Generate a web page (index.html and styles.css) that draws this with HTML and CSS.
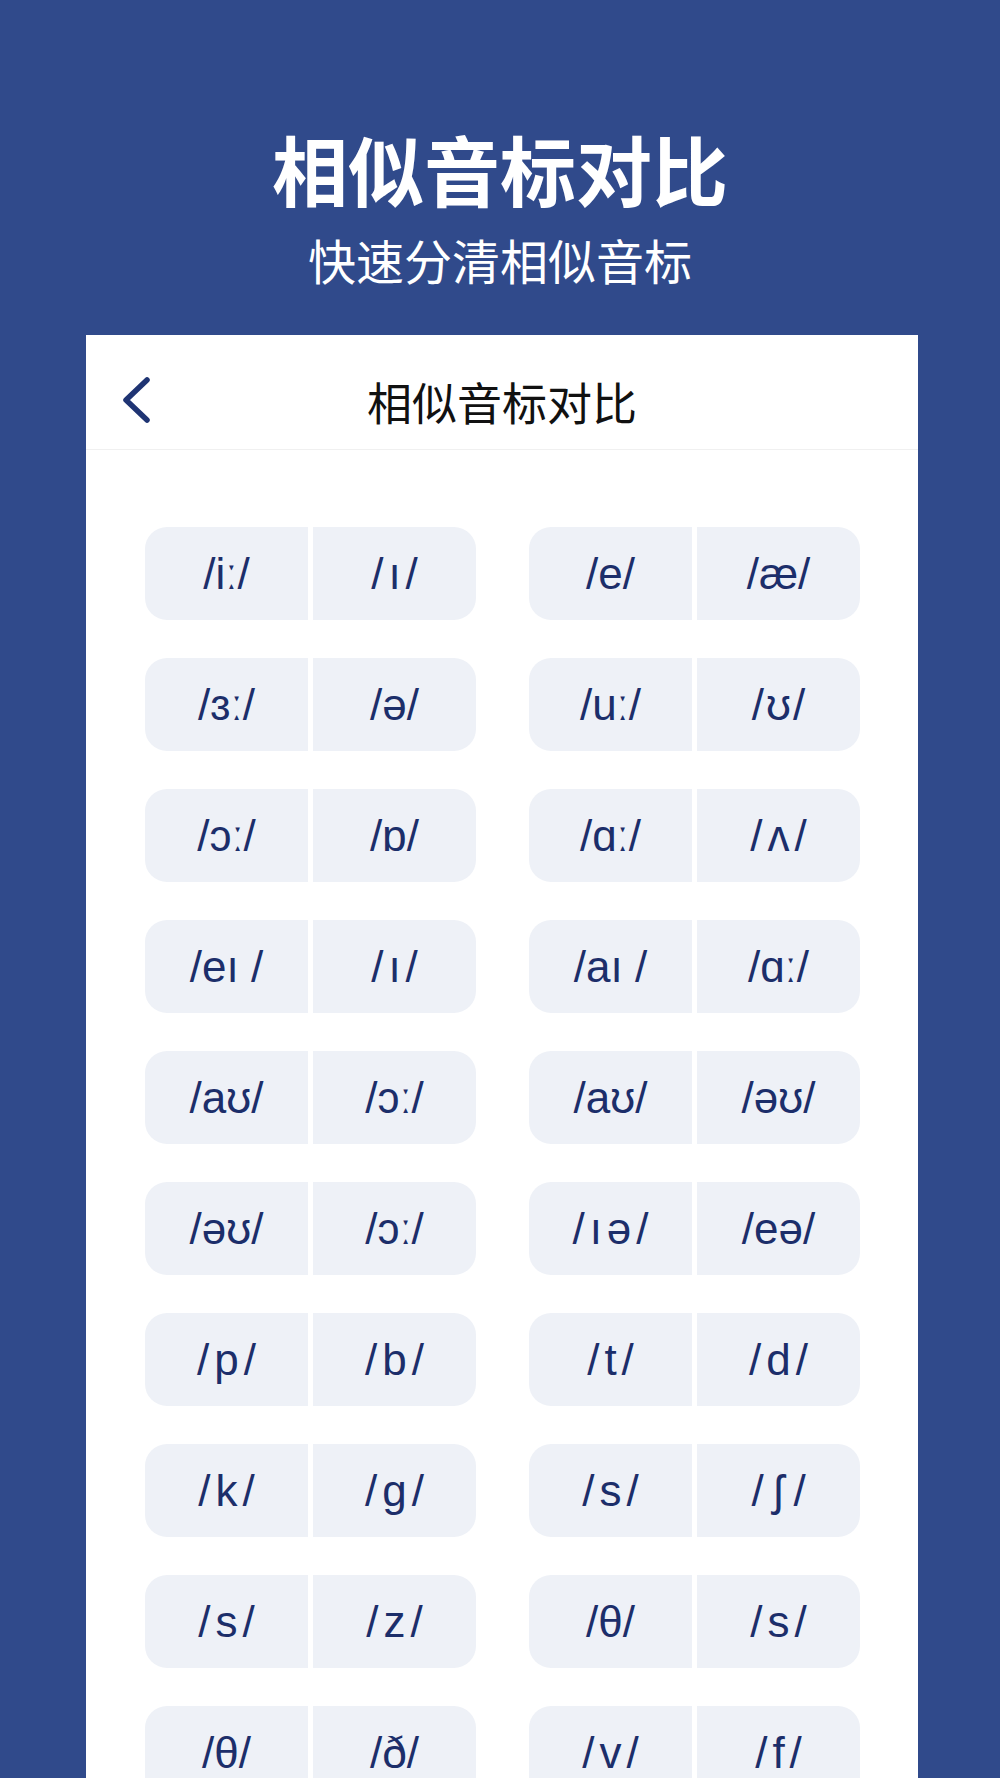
FILE: index.html
```html
<!DOCTYPE html>
<html lang="zh-CN">
<head>
    <meta charset="UTF-8">
    <meta name="viewport" content="width=device-width, initial-scale=1.0">
    <title>相似音标对比</title>
    <link rel="stylesheet" href="styles.css">
</head>
<body>
    <div class="hero">
        <h1>相似音标对比</h1>
        <p class="subtitle">快速分清相似音标</p>
    </div>

    <div class="card">
        <div class="card-header">
            <svg class="back" width="34" height="52" viewBox="0 0 34 52">
                <polyline points="27,6 6,26 27,46" fill="none" stroke="#1f3473" stroke-width="5.5" stroke-linecap="round" stroke-linejoin="round"/>
            </svg>
            <h2>相似音标对比</h2>
        </div>

        <div class="pairs">
            <div class="pair"><span>/iː/</span><span class="sp">/ı/</span></div>
            <div class="pair"><span>/e/</span><span>/æ/</span></div>

            <div class="pair"><span>/ɜː/</span><span>/ə/</span></div>
            <div class="pair"><span>/uː/</span><span class="sp-s">/ʊ/</span></div>

            <div class="pair"><span>/ɔː/</span><span>/ɒ/</span></div>
            <div class="pair"><span>/ɑː/</span><span class="sp">/ʌ/</span></div>

            <div class="pair"><span>/eı /</span><span class="sp">/ı/</span></div>
            <div class="pair"><span>/aı /</span><span>/ɑː/</span></div>

            <div class="pair"><span>/aʊ/</span><span>/ɔː/</span></div>
            <div class="pair"><span>/aʊ/</span><span>/əʊ/</span></div>

            <div class="pair"><span>/əʊ/</span><span>/ɔː/</span></div>
            <div class="pair"><span class="sp">/ıə/</span><span>/eə/</span></div>

            <div class="pair"><span class="sp">/p/</span><span class="sp">/b/</span></div>
            <div class="pair"><span class="sp">/t/</span><span class="sp">/d/</span></div>

            <div class="pair"><span class="sp">/k/</span><span class="sp">/g/</span></div>
            <div class="pair"><span class="sp">/s/</span><span class="sp-w">/ʃ/</span></div>

            <div class="pair"><span class="sp">/s/</span><span class="sp">/z/</span></div>
            <div class="pair"><span>/θ/</span><span class="sp">/s/</span></div>

            <div class="pair"><span>/θ/</span><span>/ð/</span></div>
            <div class="pair"><span class="sp">/v/</span><span class="sp">/f/</span></div>
        </div>
    </div>
</body>
</html>
```

FILE: styles.css
```css
body {
    margin: 0;
    padding: 0;
    height: 1778px;
    overflow: hidden;
    background-color: #304a8b;
    font-family: "Noto Sans CJK SC", "Noto Sans", sans-serif;
}

.hero {
    padding-top: 123px;
    text-align: center;
    color: #fff;
}

.hero h1 {
    margin: 0;
    font-size: 76px;
    line-height: 90px;
    font-weight: 700;
}

.hero .subtitle {
    margin: 16px 0 0;
    font-size: 48px;
    line-height: 60px;
    font-weight: 400;
}

.card {
    margin: 46px 82px 0 86px;
    background-color: #fff;
    height: 1500px;
}

.card-header {
    position: relative;
    height: 96px;
    padding-top: 18px;
    display: flex;
    align-items: center;
    justify-content: center;
    border-bottom: 1px solid #f0f0f0;
}

.card-header .back {
    position: absolute;
    left: 34px;
    top: 39px;
}

.card-header h2 {
    margin: 0;
    font-size: 45px;
    font-weight: 400;
    color: #111;
}

.pairs {
    display: grid;
    grid-template-columns: 331px 331px;
    grid-auto-rows: 93px;
    column-gap: 53px;
    row-gap: 38px;
    padding: 77px 58px 0 59px;
}

.pair {
    display: grid;
    grid-template-columns: 1fr 1fr;
    column-gap: 5px;
}

.pair span {
    display: flex;
    align-items: center;
    justify-content: center;
    background-color: #eef1f7;
    color: #1c2e6a;
    font-family: "Liberation Sans", "DejaVu Sans", sans-serif;
    font-size: 44px;
    white-space: pre;
}

.pair span:first-child {
    border-radius: 22px 0 0 22px;
}

.pair span:last-child {
    border-radius: 0 22px 22px 0;
}

.pair span.sp {
    letter-spacing: 5px;
    padding-left: 5px;
}

.pair span.sp-s {
    letter-spacing: 2px;
    padding-left: 2px;
}

.pair span.sp-w {
    letter-spacing: 10px;
    padding-left: 10px;
}
```
